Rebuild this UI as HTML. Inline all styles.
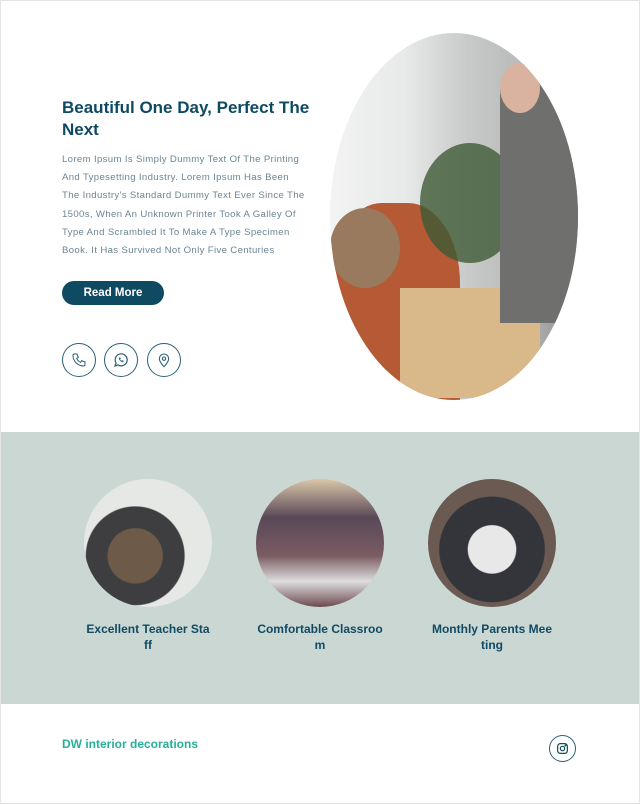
<!DOCTYPE html>
<html><head><meta charset="utf-8"><style>
*{margin:0;padding:0;box-sizing:border-box}
body{width:640px;height:804px;background:#fff;font-family:"Liberation Sans",sans-serif;position:relative;overflow:hidden}
.frame{position:absolute;left:0;top:0;width:640px;height:804px;border:1px solid #e4e4e4;z-index:5;pointer-events:none}
.abs{position:absolute}
h1{position:absolute;left:62px;top:97px;width:270px;font-size:17px;line-height:22px;color:#0f4a63;font-weight:bold}
p.t{position:absolute;left:62px;top:151px;white-space:nowrap;font-size:9.6px;line-height:18.2px;color:#6c8593;letter-spacing:.35px}
.btn{position:absolute;left:62px;top:281px;width:102px;height:24px;border-radius:12px;background:#0f4a63;color:#fff;font-size:11.5px;font-weight:bold;text-align:center;line-height:24px}
.ic{position:absolute;top:343px;width:34px;height:34px;border:1px solid #2b5f78;border-radius:50%;display:flex;align-items:center;justify-content:center}
.hero{position:absolute;left:330px;top:33px;width:248px;height:367px;border-radius:50%;overflow:hidden;background:linear-gradient(90deg,#f2f3f2 0%,#e8eae9 30%,#c9cbca 55%,#b9bcbb 75%,#8e8f8d 100%)}
.band{position:absolute;left:0;top:432px;width:640px;height:272px;background:#cad7d3}
.c{position:absolute;top:479px;width:128px;height:128px;border-radius:50%;overflow:hidden}
.lb{position:absolute;top:621px;width:140px;text-align:center;font-size:12px;line-height:16px;font-weight:bold;color:#124a62}
</style></head><body>
<div class="frame"></div>
<h1>Beautiful One Day, Perfect The Next</h1>
<p class="t">Lorem Ipsum Is Simply Dummy Text Of The Printing<br>And Typesetting Industry. Lorem Ipsum Has Been<br>The Industry's Standard Dummy Text Ever Since The<br>1500s, When An Unknown Printer Took A Galley Of<br>Type And Scrambled It To Make A Type Specimen<br>Book. It Has Survived Not Only Five Centuries</p>
<div class="btn">Read More</div>
<div class="ic" style="left:62px"><svg width="16" height="16" viewBox="0 0 24 24" fill="none" stroke="#2b5f78" stroke-width="1.5"><path d="M5 3h4l2 5-2.5 1.5a11 11 0 0 0 6 6L16 13l5 2v4a2 2 0 0 1-2 2A16 16 0 0 1 3 5a2 2 0 0 1 2-2"/></svg></div>
<div class="ic" style="left:104px"><svg width="16" height="16" viewBox="0 0 24 24" fill="none" stroke="#2b5f78" stroke-width="1.8"><path d="M3 21l1.6-4.6A9 9 0 1 1 7.6 19.4z"/><path d="M9 9c0 3 3 6 6 6l1-1.5-2-1-1 1c-1-.5-2-1.5-2.5-2.5l1-1-1-2z" fill="#2b5f78" stroke-width=".5"/></svg></div>
<div class="ic" style="left:147px"><svg width="16" height="16" viewBox="0 0 24 24" fill="none" stroke="#2b5f78" stroke-width="1.6"><path d="M12 22s7-7 7-12a7 7 0 0 0-14 0c0 5 7 12 7 12z"/><circle cx="12" cy="10" r="2.5"/></svg></div>
<div class="hero">
<div class="abs" style="left:0;top:170px;width:130px;height:200px;background:#b55a35;border-radius:40% 40% 0 0"></div>
<div class="abs" style="left:0;top:175px;width:70px;height:80px;background:#9a7a5e;border-radius:50%"></div>
<div class="abs" style="left:70px;top:255px;width:140px;height:110px;background:#d9b98a"></div>
<div class="abs" style="left:90px;top:110px;width:100px;height:120px;background:#3f5a35;border-radius:50%;opacity:.8"></div>
<div class="abs" style="left:170px;top:30px;width:78px;height:260px;background:#6f706e;border-radius:30px 30px 0 0"></div>
<div class="abs" style="left:170px;top:30px;width:40px;height:50px;background:#d9b3a0;border-radius:50%"></div>
</div>
<div class="band"></div>
<div class="c" style="left:84px;background:radial-gradient(circle at 40% 60%,#6d5a48 0 25%,#3e3e40 26% 45%,#e6e8e6 46%)"></div>
<div class="c" style="left:256px;background:linear-gradient(180deg,#d9c6a8 0%,#5a4858 30%,#7a5c62 60%,#ddd 80%,#6e4a52 100%)"></div>
<div class="c" style="left:428px;background:radial-gradient(circle at 50% 55%,#e8e8e8 0 25%,#33353a 26% 55%,#6a5a52 56%)"></div>
<div class="lb" style="left:78px">Excellent Teacher Sta<br>ff</div>
<div class="lb" style="left:250px">Comfortable Classroo<br>m</div>
<div class="lb" style="left:422px">Monthly Parents Mee<br>ting</div>
<div class="abs" style="left:62px;top:737px;font-size:12px;font-weight:bold;color:#26b09a">DW interior decorations</div>
<div class="abs" style="left:549px;top:735px;width:27px;height:27px;border:1px solid #2b5f78;border-radius:50%;display:flex;align-items:center;justify-content:center"><svg width="13" height="13" viewBox="0 0 24 24" fill="none" stroke="#124a62" stroke-width="2.2"><rect x="3" y="3" width="18" height="18" rx="5"/><circle cx="12" cy="12" r="4"/><circle cx="17.5" cy="6.5" r=".8" fill="#124a62"/></svg></div>
</body></html>
